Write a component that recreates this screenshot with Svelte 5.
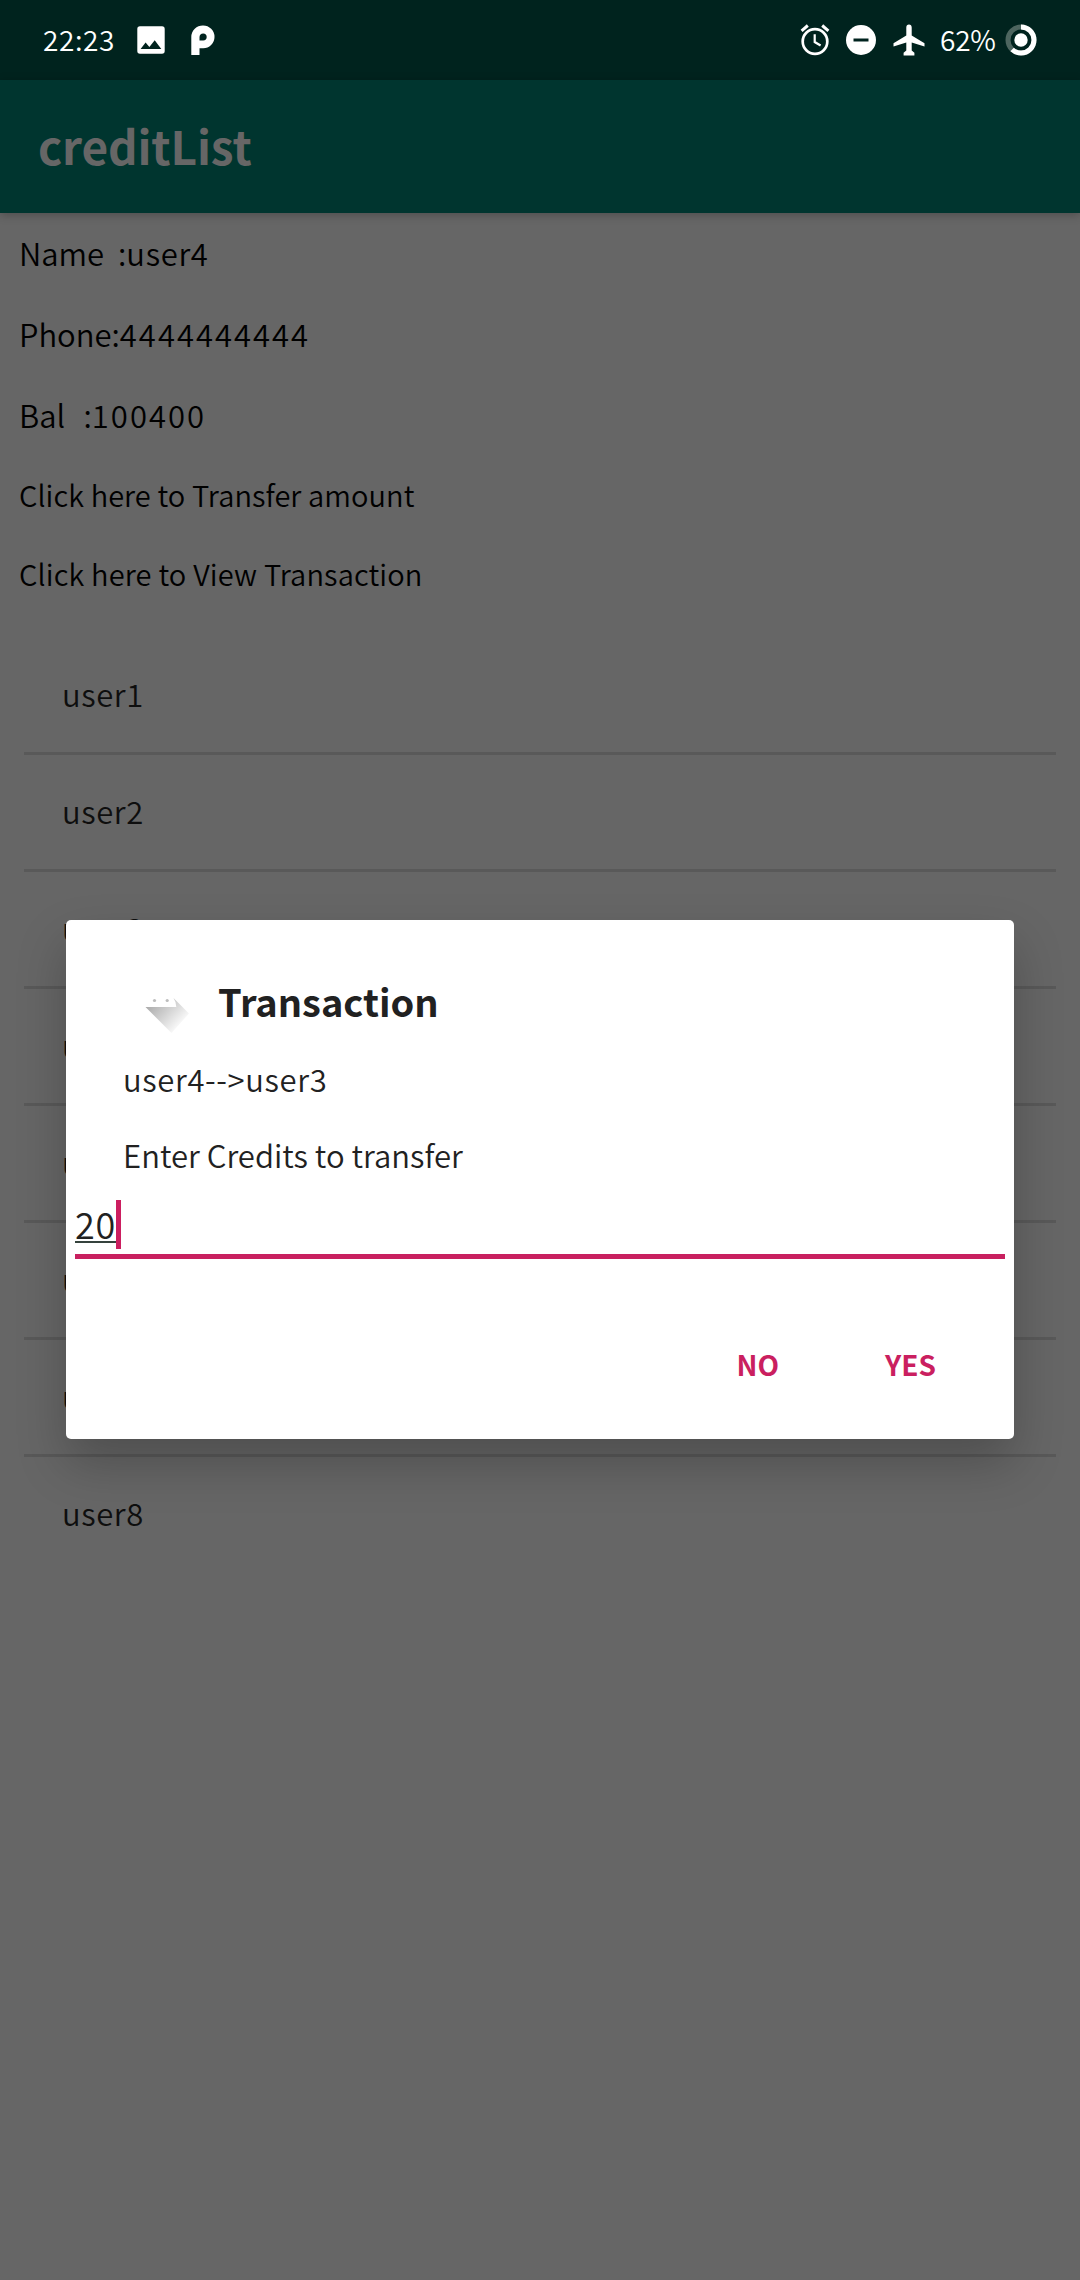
<script>
  const details = [
    { label: 'Name  :', value: 'user4', kind: 'name' },
    { label: 'Phone:', value: '4444444444', kind: 'digits' },
    { label: 'Bal   :', value: '100400', kind: 'bal digits' }
  ];
  const links = ['Click here to Transfer amount', 'Click here to View Transaction'];
  const users = [1, 2, 3, 4, 5, 6, 7, 8].map((n) => `user${n}`);
</script>

<div class="screen">
  <header class="status">
    <span class="clock">22:23</span>
    <svg class="photo" width="28" height="28" viewBox="0 0 28 28">
      <path fill="#fff" fill-rule="evenodd" d="M3 .3h22a2.7 2.7 0 0 1 2.7 2.7v22a2.7 2.7 0 0 1-2.7 2.7H3A2.7 2.7 0 0 1 .3 25V3A2.7 2.7 0 0 1 3 .3zM3.6 23H24.3L17.7 14.2 12.4 20.9 8.6 16.4z" />
    </svg>
    <svg class="pmark" width="24" height="30" viewBox="0 0 24 30">
      <path fill="#fff" fill-rule="evenodd" d="M.3 30V12A11.6 11.6 0 0 1 12 .5A11.4 11.4 0 0 1 23.5 12A11.3 11.3 0 0 1 12 23.300H8.500V30zM8.500 15.500H12.200A3.600 3.600 0 0 0 15.700 12A3.600 3.600 0 0 0 12.200 8.500A3.700 3.700 0 0 0 8.500 12z" />
    </svg>
    <span class="fill"></span>
    <svg class="alarm" width="30" height="32" viewBox="0 0 30 32" fill="none" stroke="#fff">
      <circle cx="15" cy="17.500" r="12.300" stroke-width="2.700" />
      <path stroke-width="2.200" d="M14.700 10.300V18L20.600 21.500" />
      <path stroke-width="3" d="M1.600 6.800L7.800 1.500M28.400 6.800L22.200 1.500" />
    </svg>
    <svg class="dnd" width="30" height="30" viewBox="0 0 30 30">
      <circle cx="15" cy="15" r="15" fill="#fff" />
      <path d="M7.500 15H22.500" stroke="#00231e" stroke-width="3" />
    </svg>
    <svg class="plane" width="32" height="32" viewBox="0 0 32 32">
      <path fill="#fff" d="M16 .4C14.300 .4 13.300 1.700 13.300 3.400V11.500L.5 19.300V22.500L13.300 18.600V26.500L10.600 28.700V31.600L16 31.600 21.400 31.600V28.700L18.700 26.500V18.600L31.500 22.500V19.300L18.700 11.500V3.400C18.700 1.700 17.700 .4 16 .4z" />
    </svg>
    <span class="percent">62%</span>
    <svg class="battery" width="32" height="32" viewBox="0 0 32 32">
      <circle cx="16" cy="16" r="13" fill="none" stroke="#4d655f" stroke-width="5" />
      <circle cx="16" cy="16" r="13" fill="none" stroke="#fff" stroke-width="5" pathLength="100" stroke-dasharray="62 38" transform="rotate(-90 16 16)" />
      <circle cx="16" cy="16" r="6.700" fill="#fff" />
    </svg>
  </header>

  <div class="appbar"><h1>creditList</h1></div>

  <section class="details">
    {#each details as row}
      <p class={row.kind}><span class="label">{row.label}</span><span class="data">{row.value}</span></p>
    {/each}
    {#each links as link}
      <p class="link">{link}</p>
    {/each}
  </section>

  <ul class="users">
    {#each users as user}
      <li>{user}</li>
    {/each}
  </ul>

  <div class="dialog">
    <div class="heading">
      <svg width="72" height="72" viewBox="0 0 72 72">
        <defs>
          <linearGradient id="cast" x1="20" y1="24" x2="50" y2="52" gradientUnits="userSpaceOnUse">
            <stop offset="0" stop-color="#000" stop-opacity=".34" />
            <stop offset=".45" stop-color="#000" stop-opacity=".19" />
            <stop offset="1" stop-color="#000" stop-opacity="0" />
          </linearGradient>
        </defs>
        <path fill="url(#cast)" d="M14.500 31H45.300Q45.300 26 42.500 22L58 37.500 40.500 57z" />
        <circle cx="23.500" cy="24.500" r="1.600" fill="#bdbdbd" />
        <circle cx="36.200" cy="24.500" r="1.600" fill="#bdbdbd" />
      </svg>
      <h2>Transaction</h2>
    </div>
    <p class="route">user4--&gt;user3</p>
    <p class="prompt">Enter Credits to transfer</p>
    <div class="field"><span class="value">20</span><span class="caret"></span></div>
    <div class="actions">
      <span class="no">NO</span>
      <span class="yes">YES</span>
    </div>
  </div>
</div>

<style>
  :global(body) {
    margin: 0;
    background: #666;
  }

  .screen {
    position: relative;
    width: 1080px;
    height: 2280px;
    overflow: hidden;
    background: #666;
    color: #000;
    font-family: 'Noto Sans CJK SC', 'Noto Sans', sans-serif;
    font-size: 31px;
    font-weight: 350;
  }

  h1, h2, p, ul {
    margin: 0;
    padding: 0;
  }

  .status {
    display: flex;
    align-items: center;
    box-sizing: border-box;
    height: 80px;
    padding: 0 43px 0 43px;
    background: #00231e;
    color: #fff;
    font-size: 28px;
  }

  .clock { width: 94px; padding-bottom: 2px; letter-spacing: 0.6px; }
  .photo { margin-right: 26px; }
  .fill { flex: 1; }
  .alarm { margin-right: 16px; }
  .dnd { margin-right: 17px; }
  .plane { margin-right: 15px; }
  .percent { width: 57px; margin-right: 8px; padding-bottom: 2px; letter-spacing: -0.2px; }
  .status svg { flex: none; }

  .appbar {
    position: relative;
    display: flex;
    align-items: flex-start;
    height: 133px;
    padding-left: 38px;
    background: #00352f;
    box-shadow: 0 2px 9px rgba(0, 0, 0, 0.25);
  }

  h1 {
    color: #666;
    font-size: 46px;
    font-weight: 700;
    letter-spacing: -0.15px;
    line-height: 131px;
    white-space: nowrap;
  }

  .details { padding-left: 19px; }

  .details p {
    height: 81px;
    line-height: 79px;
    white-space: pre;
  }

  .name .data { letter-spacing: 0.7px; }
  .digits .data { letter-spacing: 2px; }
  .bal .label { word-spacing: -0.8px; }

  .details .link {
    height: 79px;
    font-size: 29px;
    letter-spacing: 0.05px;
    line-height: 76px;
    word-spacing: 0.2px;
  }

  .details .link:last-child { letter-spacing: 0.13px; }

  .users {
    padding: 24px 24px 0;
    list-style: none;
  }

  .users li {
    height: 114px;
    padding-left: 38px;
    border-bottom: 3px solid #595959;
    color: #0e0e0e;
    letter-spacing: 0.6px;
    line-height: 111px;
  }

  .users li:last-child { border-bottom: 0; }

  .dialog {
    position: absolute;
    left: 66px;
    top: 920px;
    box-sizing: border-box;
    width: 948px;
    height: 519px;
    padding-top: 42px;
    border-radius: 5px;
    background: #fff;
    color: #212121;
    box-shadow: 0 24px 50px rgba(0, 0, 0, 0.23);
  }

  .heading {
    display: flex;
    align-items: flex-start;
    gap: 15px;
    height: 80px;
    padding-left: 65px;
  }

  .heading svg { flex: none; margin-top: 14px; }

  h2 {
    font-size: 38px;
    font-weight: 700;
    line-height: 77px;
  }

  .dialog p {
    height: 76px;
    padding-left: 57px;
    line-height: 74px;
    white-space: pre;
  }

  .route { letter-spacing: 0.65px; }
  .prompt { letter-spacing: 0.03px; }

  .field {
    display: flex;
    align-items: flex-start;
    height: 54px;
    margin: 6px 9px 0;
    border-bottom: 5px solid #c8205f;
  }

  .value {
    width: 41px;
    height: 41px;
    border-bottom: 2px solid #35433d;
    font-size: 36px;
    letter-spacing: 0.8px;
    line-height: 47px;
  }

  .caret {
    width: 5px;
    height: 49px;
    background: #cc1e60;
  }

  .actions {
    display: flex;
    justify-content: flex-end;
    gap: 106px;
    margin-top: 67px;
    padding-right: 78px;
    color: #ca1f60;
    font-size: 28px;
    font-weight: 700;
    line-height: 77px;
  }
</style>
